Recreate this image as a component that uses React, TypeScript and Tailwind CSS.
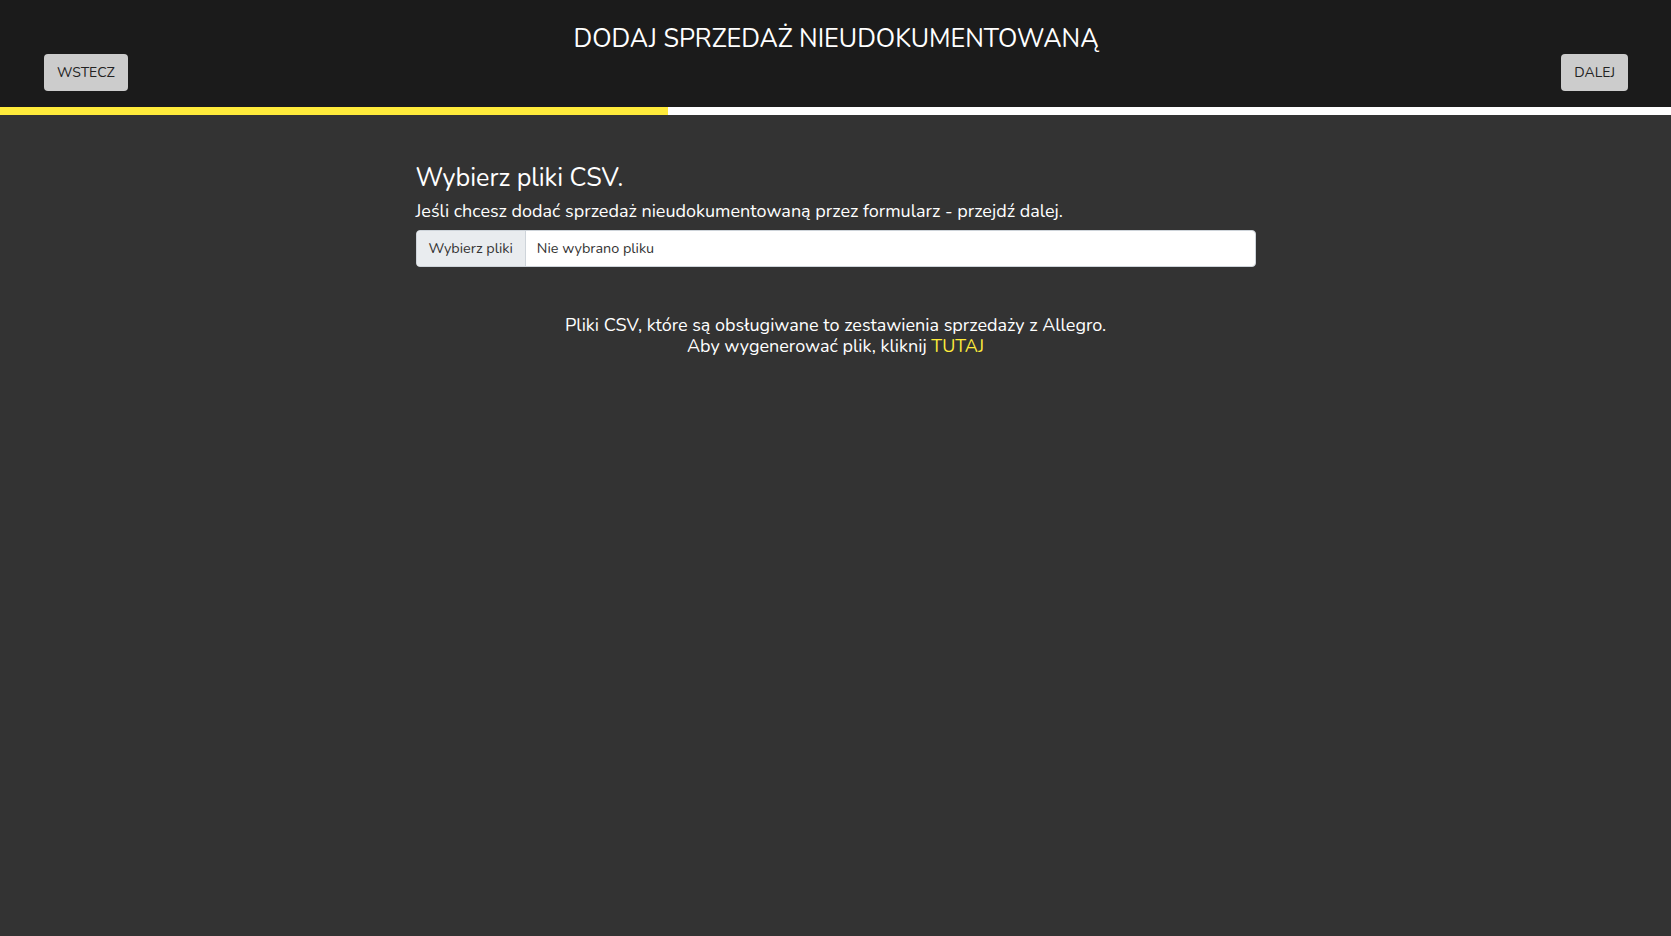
import { useState } from "react";

export default function App() {
  const [fileName] = useState<string | null>(null);

  return (
    <div className="min-h-[936px] w-full bg-[#333333] font-['Nunito','Lato',sans-serif] text-white">
      {/* Top bar */}
      <header className="grid h-[107px] grid-cols-[1fr_auto_1fr] bg-[#1b1b1b] pb-[16px] pl-[44px] pr-[43px]">
        <div className="flex items-end">
          <button className="h-[37px] rounded-[4px] bg-[#cccccc] px-[13px] text-[14px] text-[#222222]">
            WSTECZ
          </button>
        </div>
        <h1 className="pt-[24px] text-[25.2px] leading-[30px] font-normal">
          DODAJ SPRZEDAŻ NIEUDOKUMENTOWANĄ
        </h1>
        <div className="flex items-end justify-end">
          <button className="h-[37px] rounded-[4px] bg-[#cccccc] px-[13px] text-[14px] text-[#222222]">
            DALEJ
          </button>
        </div>
      </header>

      {/* Progress */}
      <div className="flex h-[8px] bg-white">
        <div className="w-[40%] bg-[#ffeb3b]" />
      </div>

      <main className="mx-auto w-[840px] pt-[48px]">
        <h2 className="text-[25.2px] leading-[30px] font-normal">Wybierz pliki CSV.</h2>
        <p className="mt-[5px] text-[18px] leading-[26px]">
          Jeśli chcesz dodać sprzedaż nieudokumentowaną przez formularz - przejdź dalej.
        </p>
        <label className="mt-[6px] flex h-[37px] cursor-pointer overflow-hidden rounded-[4px] border border-[#ced4da] bg-white text-[14.4px] text-[#333333]">
          <span className="flex items-center border-r border-[#ced4da] bg-[#e9ecef] px-[12px]">Wybierz pliki</span>
          <span className="flex items-center px-[11px]">{fileName ?? "Nie wybrano pliku"}</span>
          <input type="file" multiple accept=".csv" className="hidden" />
        </label>

        <div className="mt-[48px] text-center text-[18px] leading-[21px]">
          <p>Pliki CSV, które są obsługiwane to zestawienia sprzedaży z Allegro.</p>
          <p>
            Aby wygenerować plik, kliknij <a className="text-[#ffeb3b]" href="#">TUTAJ</a>
          </p>
        </div>
      </main>
    </div>
  );
}
